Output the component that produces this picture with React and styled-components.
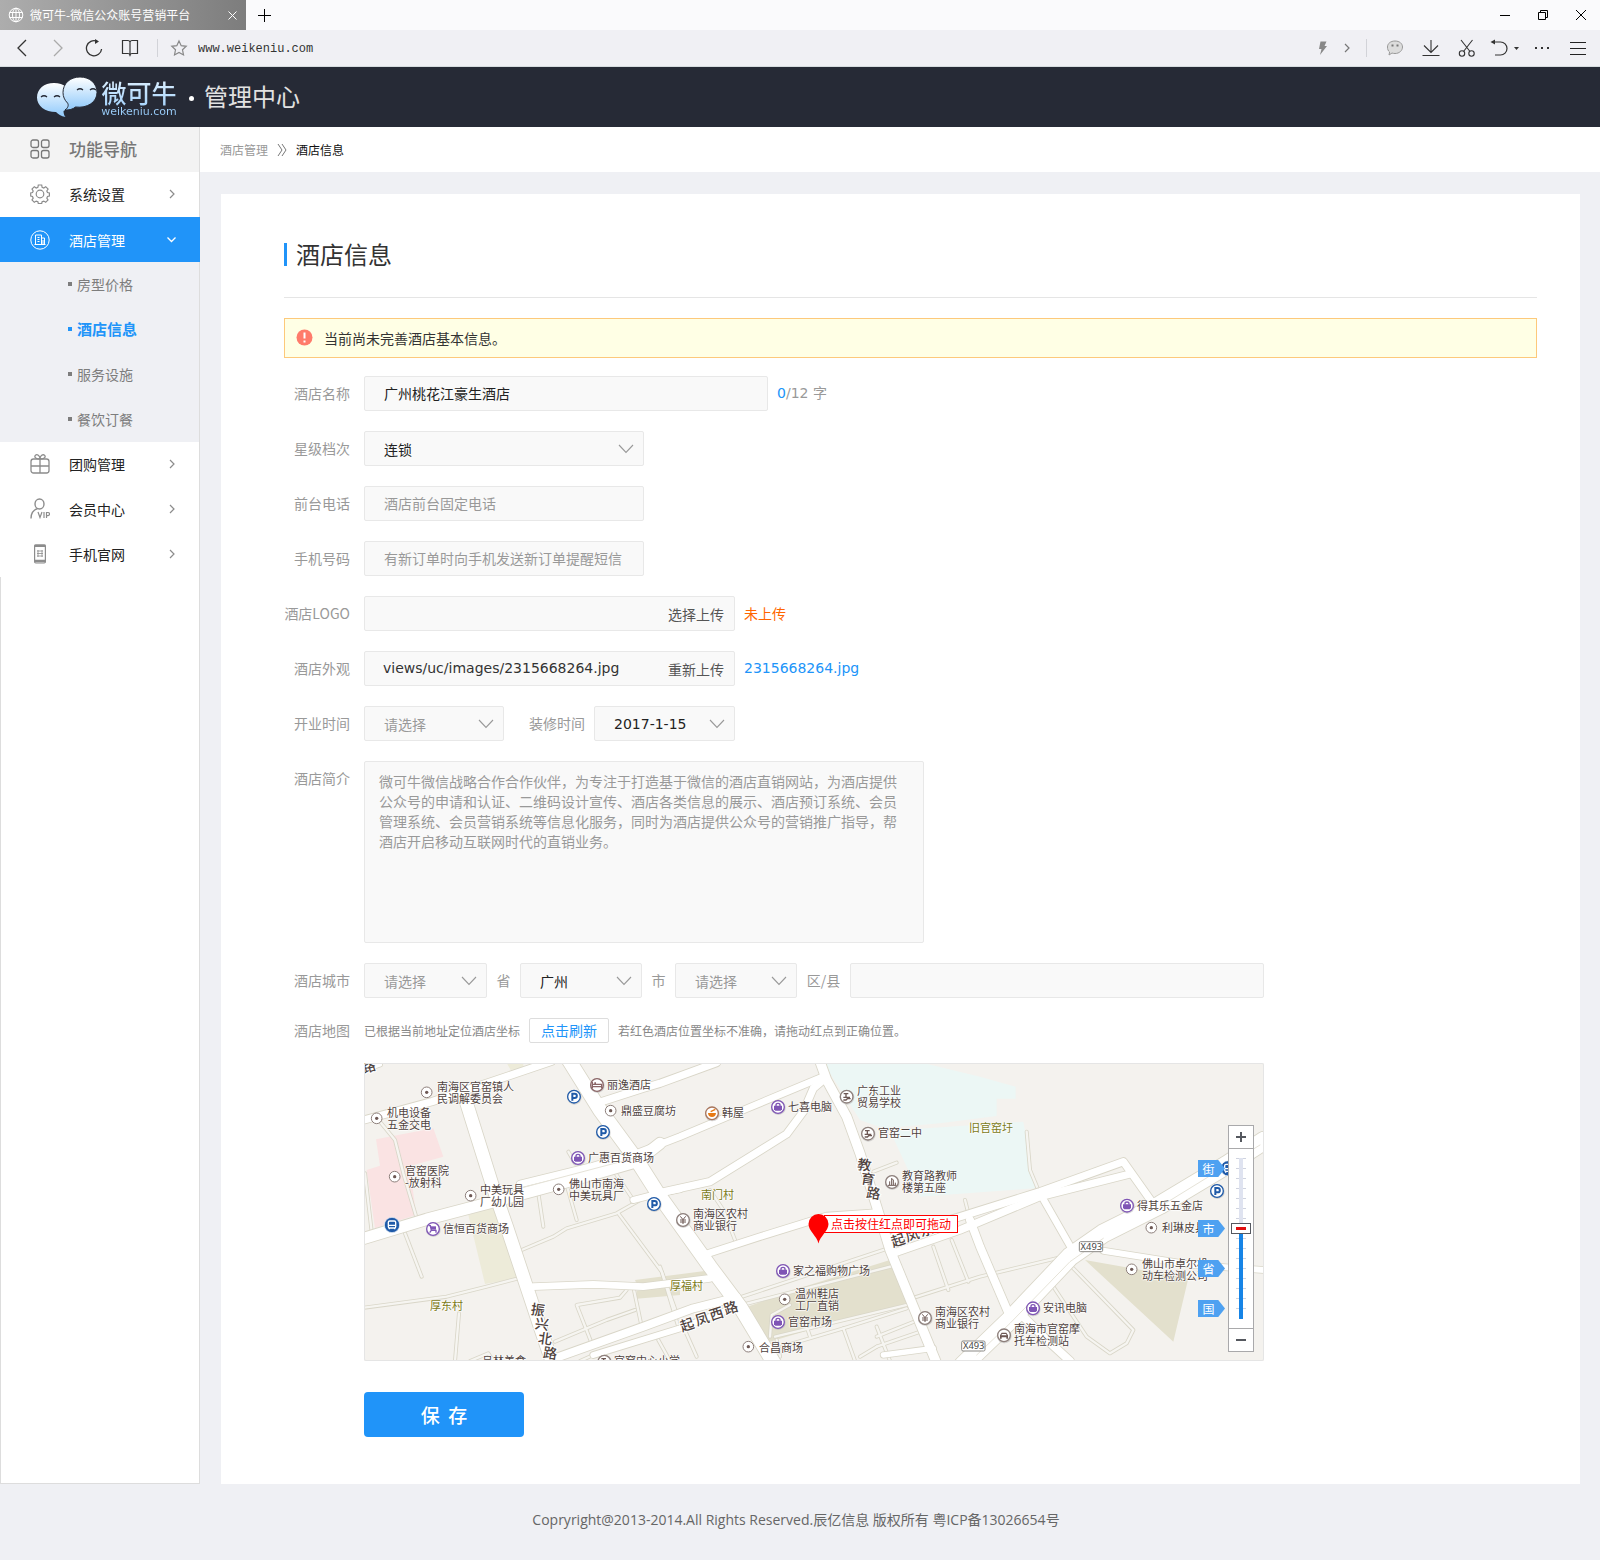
import React, { useState } from 'react';
import styled, { createGlobalStyle, css } from 'styled-components';

const sans = '"Open Sans", "Noto Sans CJK SC", sans-serif';
const cjk = '"Noto Sans CJK SC", sans-serif';
const wide = '"DejaVu Sans", "Noto Sans CJK SC", sans-serif';
const blue = '#2094f9';

const GlobalStyle = createGlobalStyle`
  * { box-sizing: border-box; }
  body { margin: 0; background: #eff0f4; color: #222; font: 14px/20px ${sans}; }
  button, input, select, textarea { font: inherit; color: inherit; }
  button { padding: 0; border: 0; background: none; cursor: pointer; }
  ul, h1, h2, p { margin: 0; padding: 0; list-style: none; font-weight: 400; }
  a { color: inherit; text-decoration: none; }
  svg { display: block; }
`;

/* ---------- browser chrome ---------- */
const TabBar = styled.div`
  display: flex;
  height: 30px;
  background: #fafafc;
`;
const Tab = styled.div`
  display: flex;
  align-items: center;
  gap: 6px;
  width: 246px;
  padding: 0 9px 0 8px;
  background: linear-gradient(90deg, #adadad, #7d7d7d);
  color: #fff;
  font: 12px/18px ${cjk};
  span { flex: 1; white-space: nowrap; }
`;
const Spacer = styled.div`flex: 1;`;
const IconButton = styled.button`
  display: flex;
  align-items: center;
  justify-content: center;
  gap: 6px;
  flex: none;
  width: ${(p) => p.$w || 36}px;
  color: ${(p) => p.$color || '#333'};
`;
const ToolBar = styled.div`
  display: flex;
  align-items: stretch;
  height: 37px;
  padding: 0 4px;
  border-bottom: 1px solid #d6dcdf;
  background: #f0f0f4;
`;
const Divider = styled.i`
  width: 1px;
  height: 18px;
  margin: 9px ${(p) => p.$right}px 0 ${(p) => p.$left}px;
  background: #d2d3d8;
`;
const Address = styled.input`
  width: 300px;
  padding: 2px 1px 0;
  border: 0;
  outline: 0;
  background: none;
  color: #333;
  font: 12px/18px "Liberation Mono", monospace;
`;

/* ---------- site header ---------- */
const Header = styled.header`
  display: flex;
  align-items: center;
  height: 60px;
  padding-left: 36px;
  background: #262a36;
`;
const Brand = styled.a`
  display: flex;
  align-items: center;
  gap: 2px;
`;
const BrandText = styled.span`
  display: flex;
  flex-direction: column;
  align-items: center;
  width: 78px;
  padding-top: 4px;
  background: linear-gradient(#e4f3ff, #8ec8fb);
  background-clip: text;
  color: transparent;
  font: 500 25px/26px ${cjk};
  small { font: 11px/14px "DejaVu Sans", sans-serif; }
`;
const Dot = styled.i`
  width: 5px;
  height: 5px;
  margin: 3px 10px 0 11px;
  border-radius: 50%;
  background: #fff;
`;
const Center = styled.span`
  padding-bottom: 2px;
  color: #e2e2e2;
  font: 24px/36px ${cjk};
`;

/* ---------- frame ---------- */
const Frame = styled.div`
  display: grid;
  grid-template-columns: 200px minmax(0, 1fr);
`;
const Sidebar = styled.nav`
  display: flex;
  flex-direction: column;
  background: #fff;
  box-shadow: inset -1px 0 #ddd;
`;
const NavHead = styled.h2`
  display: flex;
  align-items: center;
  gap: 19px;
  height: 45px;
  margin-right: 1px;
  padding: 0 0 2px 30px;
  background: #f3f3f3;
  color: #777;
  font: 500 17px/24px ${cjk};
`;
const NavRow = styled.a`
  display: flex;
  align-items: center;
  gap: 19px;
  height: 45px;
  padding: 0 24px ${(p) => (p.$active ? 0 : 2)}px 30px;
  font: 14px/20px ${cjk};
  color: ${(p) => (p.$active ? '#fff' : '#222')};
  background: ${(p) => (p.$active ? blue : 'transparent')};
  svg { color: ${(p) => (p.$active ? '#fff' : '#8c8c8c')}; }
  span { flex: 1; }
`;
const SubList = styled.ul`
  margin-right: 1px;
  background: #eff0f4;
`;
const SubLink = styled.a`
  display: flex;
  align-items: center;
  gap: 5px;
  height: 45px;
  padding: 0 0 2px 68px;
  color: #7d7d7d;
  font: 14px/20px ${cjk};
  &::before { content: ''; width: 4px; height: 4px; background: currentColor; }
  ${(p) => p.$active && css`color: ${blue}; font-weight: 700; font-size: 15px;`}
`;
const Filler = styled.div`
  flex: 1;
  border: solid #ddd;
  border-width: 0 1px 1px;
`;
const Crumbs = styled.div`
  display: flex;
  align-items: center;
  gap: 9px;
  height: 45px;
  padding-left: 20px;
  background: #fff;
  color: #999;
  font: 12px/18px ${cjk};
  svg { color: #777; }
  b { color: #111; font-weight: 400; }
`;
const Card = styled.main`
  margin: 22px 20px 0 21px;
  padding: 45px 43px 47px 63px;
  background: #fff;
`;
const Title = styled.h1`
  display: flex;
  align-items: center;
  gap: 9px;
  padding-bottom: 28px;
  border-bottom: 1px solid #e5e5e5;
  color: #333;
  font: 24px/30px ${cjk};
  &::before { content: ''; width: 3px; height: 23px; background: ${blue}; }
`;
const Alert = styled.p`
  display: flex;
  align-items: center;
  gap: 11px;
  height: 40px;
  margin: 20px 0 18px;
  padding: 0 0 1px 11px;
  border: 1px solid #fdc97b;
  background: #ffffe5;
  color: #333;
  font-family: ${cjk};
`;

/* ---------- form ---------- */
const Form = styled.form`
  display: flex;
  flex-direction: column;
  gap: 20px;
  max-width: 980px;
  font-family: ${cjk};
`;
const Row = styled.div`
  display: grid;
  grid-template-columns: 66px minmax(0, 1fr);
  column-gap: 14px;
  line-height: ${(p) => p.$line || 35}px;
`;
const Label = styled.label`
  color: #999;
  text-align: right;
  white-space: nowrap;
`;
const Controls = styled.div`
  display: flex;
  align-items: center;
`;
const box = css`
  height: 35px;
  border: 1px solid #e8e8e8;
  border-radius: 2px;
  background: #f9f9f9;
  outline: 0;
`;
const Input = styled.input`
  ${box}
  width: ${(p) => p.$w}px;
  padding: 0 19px;
  color: #222;
  &::placeholder { color: #999; opacity: 1; }
`;
const GrowInput = styled(Input)`
  flex: 1;
  min-width: 0;
`;
const SelectBox = styled.span`
  position: relative;
  width: ${(p) => p.$w}px;
  height: 35px;
  color: #999;
  svg { position: absolute; right: 10px; top: 13px; pointer-events: none; }
`;
const NativeSelect = styled.select`
  ${box}
  display: block;
  width: 100%;
  padding: 0 30px 0 19px;
  appearance: none;
  color: ${(p) => (p.$dim ? '#999' : '#222')};
  font-family: ${(p) => (p.$wide ? wide : cjk)};
`;
const Unit = styled.span`
  width: ${(p) => p.$w || 33}px;
  color: #999;
  text-align: center;
`;
const SideLabel = styled.label`
  margin: 0 9px 0 25px;
  color: #999;
`;
const Note = styled.span`
  margin-left: 9px;
  color: ${(p) => p.$color || '#999'};
  font-family: ${(p) => (p.$wide ? wide : cjk)};
  b { color: ${blue}; font-weight: inherit; }
`;
const FileBox = styled.div`
  ${box}
  display: flex;
  width: 371px;
  padding-right: 10px;
  input {
    flex: 1;
    min-width: 0;
    padding: 0 0 0 18px;
    border: 0;
    outline: 0;
    background: none;
    color: #333;
    font-family: ${wide};
  }
  button { color: #555; }
`;
const TextArea = styled.textarea`
  ${box}
  display: block;
  width: 560px;
  height: 182px;
  padding: 9px 14px;
  resize: none;
  color: #999;
  line-height: 20px;
`;
const Hint = styled.span`
  color: #888;
  font-size: 12px;
`;
const Refresh = styled.button`
  width: 80px;
  height: 25px;
  margin: 0 9px;
  padding-bottom: 2px;
  border: 1px solid #ddd;
  border-radius: 2px;
  background: #fff;
  color: ${blue};
  line-height: 20px;
`;
const Save = styled.button`
  width: 160px;
  height: 45px;
  margin: 11px 0 0 80px;
  border-radius: 4px;
  background: ${blue};
  color: #fff;
  font: 500 19px/45px ${cjk};
  white-space: pre;
`;
const Footer = styled.footer`
  padding: 26px 8px 30px 0;
  color: #666;
  text-align: center;
`;

/* ---------- map ---------- */
const MapBox = styled.div`
  position: relative;
  height: 298px;
  max-width: 900px;
  margin-left: 80px;
  overflow: hidden;
  background: #f4f2ee;
  &::after {
    content: '';
    position: absolute;
    inset: 0;
    border: 1px solid #e5e5e5;
    border-radius: 2px;
    pointer-events: none;
  }
`;
const Place = styled.span`
  position: absolute;
  left: ${(p) => p.$x}px;
  top: ${(p) => p.$y - 1}px;
  color: ${(p) => (p.$village ? '#7b7a17' : '#4f4340')};
  font: 11px/12px ${cjk};
  white-space: pre;
  text-shadow: 0 0 1px #fff, 1px 0 1px #fff, -1px 0 1px #fff, 0 1px 1px #fff;
`;
const PinTip = styled.span`
  position: absolute;
  left: 460px;
  top: 152px;
  height: 18px;
  padding: 0 6px;
  border: 1px solid #f00;
  background: #fff;
  color: #f00;
  font: 12px/15px ${cjk};
  white-space: nowrap;
`;
const PinMark = styled.svg`
  position: absolute;
  left: 444px;
  top: 151px;
`;
const ZoomPanel = styled.div`
  position: absolute;
  right: 10px;
  top: 62px;
  display: flex;
  flex-direction: column;
  align-items: center;
  width: 26px;
  height: 227px;
  border: 1px solid #a9a9ab;
  background: #fff;
  button {
    display: grid;
    place-items: center;
    width: 100%;
    height: 23px;
    color: #55585f;
  }
  button:first-child { border-bottom: 1px solid #a9a9ab; }
  button:last-child { border-top: 1px solid #a9a9ab; }
`;
const TickTrack = styled.div`
  display: flex;
  flex: 1;
  justify-content: center;
  padding: 9px 0 8px;
  background: repeating-linear-gradient(#cfd3df 0 1px, transparent 1px 10px) center 9px / 10px 152px no-repeat;
`;
const ZoomRange = styled.input`
  width: 20px;
  height: 161px;
  margin: 0;
  appearance: none;
  writing-mode: vertical-lr;
  direction: rtl;
  background: linear-gradient(#dfe3f0 0 70px, #1684e6 70px) center / 4px 100% no-repeat;
  &::-webkit-slider-thumb {
    appearance: none;
    width: 20px;
    height: 11px;
    border: 1px solid #55585f;
    background: linear-gradient(#e00f0f, #e00f0f) center / 10px 3px no-repeat #fff;
  }
`;
const LevelTag = styled.button`
  position: absolute;
  right: 39px;
  top: ${(p) => p.$y}px;
  width: 27px;
  height: 17px;
  padding-right: 6px;
  background: #4ea1f1;
  clip-path: polygon(0 0, 75% 0, 100% 50%, 75% 100%, 0 100%);
  color: #fff;
  font: 12px/16px ${cjk};
`;

const places = [
  [73, 18, '南海区官窑镇人\n民调解委员会'], [23, 44, '机电设备\n五金交电'],
  [41, 102, '官窑医院\n-放射科'], [116, 121, '中美玩具\n厂幼儿园'],
  [205, 115, '佛山市南海\n中美玩具厂'], [243, 16, '丽逸酒店'], [257, 42, '鼎盛豆腐坊'],
  [224, 89, '广惠百货商场'], [79, 160, '信恒百货商场'], [66, 237, '厚东村', 1],
  [306, 217, '厚福村', 1], [337, 126, '南门村', 1], [358, 44, '韩屋'], [424, 38, '七喜电脑'],
  [493, 22, '广东工业\n贸易学校'], [514, 64, '官窑二中'], [538, 107, '教育路教师\n楼第五座'],
  [605, 59, '旧官窑圩', 1], [329, 145, '南海区农村\n商业银行'], [429, 202, '家之福购物广场'],
  [431, 225, '温州鞋店\n工厂直销'], [424, 253, '官窑市场'], [395, 279, '合昌商场'],
  [571, 243, '南海区农村\n商业银行'], [773, 137, '得其乐五金店'], [798, 159, '利琳皮具'],
  [778, 195, '佛山市卓尔机\n动车检测公司'], [679, 239, '安讯电脑'],
  [650, 260, '南海市官窑摩\n托车检测站'], [118, 292, '吕林美食'], [250, 292, '官窑中心小学'],
];

/* Map geometry: three units to one screen pixel. */
const lanes = [
  'M60 185L105 240 130 340 168 468', 'M15 340L35 515', 'M135 520L185 650', 'M535 400L550 500',
  'M620 375L650 480', 'M485 570L580 530 620 505 770 460 850 415 890 400',
  'M775 460L905 635 955 800', 'M625 275L645 310', 'M760 330L820 420',
  'M12 743L260 710 380 680 475 655', 'M297 760L285 903', 'M585 845L740 780 825 750',
  'M695 850L650 735 780 713 800 690', 'M822 690L845 800', 'M895 840L930 903', 'M330 903L385 880 400 903',
  'M1050 390L1090 450 1125 540', 'M1540 335L1610 308', 'M1140 712L1600 560', 'M1145 735L1610 615',
  'M1230 830L1235 765 1290 735', 'M1245 830L1660 730', 'M1330 770L1350 830', 'M1250 840L1260 890',
  'M1265 860L1450 805 1640 745', 'M1450 805L1485 903', 'M1550 830L1675 780', 'M1550 860L1690 812',
  'M1550 800L1590 903', 'M1500 890L1550 860', 'M1640 720L1860 650 2110 590', 'M1720 560L1765 690', 'M1775 540L1825 665',
  'M1815 420L1830 480', 'M2000 215L2010 330 2035 390', 'M2140 625L2320 810 2300 850 2250 880 2180 830 2080 680',
  'M900 620L950 760', 'M970 800L1010 890', 'M660 903L700 885',
];
const roads = [
  [12, 'M12 30L60 14'], [22, 'M12 180L215 125 380 70 575 4'], [22, 'M710 130L850 85 900 70 1070 8'],
  [34, 'M12 535L200 478 400 425 620 365 830 305 900 250'], [20, 'M480 372L700 318 830 280 960 230 1150 150 1390 50'],
  [22, 'M890 400L1050 365 1280 222 1330 155 1360 85 1390 60'], [18, 'M820 420L890 402 960 388'],
  [20, 'M520 680L700 673 850 680 1050 655'], [24, 'M590 893L850 800 1000 745 1130 712'],
  [18, 'M700 885L960 805 1130 740'], [20, 'M1030 585L1200 530 1400 468 1550 458'],
  [22, 'M1600 580L1800 510 2040 410 2310 342'], [22, 'M1600 530L1800 470 2040 395 2290 305 2375 425'],
  [24, 'M1830 480L1860 560 1950 770'], [24, 'M1990 770L2050 830 2130 903'], [20, 'M2040 400L2140 575'],
  [18, 'M2230 572L2500 615 2712 630'], [16, 'M1570 885L1720 865'],
  [38, 'M320 130L345 210 400 385 440 500 500 680 540 800 575 903'],
  [42, 'M620 -10L720 150 830 300 900 410 1050 620 1140 740 1245 915'],
  [28, 'M1380 5L1400 60 1460 170 1500 280 1550 440 1590 570 1660 740 1730 910'],
  [54, 'M1810 915L1950 780 2130 590 2230 520 2400 435 2600 315 2712 242'],
];
const dots = [[200, 97], [50, 175], [104, 350], [332, 407], [596, 388], [752, 152], [1274, 718], [1165, 860], [2374, 503], [2315, 628]];
const parks = [[642, 110], [729, 216], [882, 432], [2571, 393]];
const bags = [[654, 294], [1254, 141], [1269, 633], [1254, 786], [2301, 437], [2019, 745]];
const schools = [[1460, 110], [1524, 221], [733, 905]];
const banks = [[969, 480], [1695, 774]];
const roadNames = [
  ['振', 533, 752, 8], ['兴', 545, 795, 8], ['北', 555, 838, 8], ['路', 570, 882, 8],
  ['教', 1513, 317, 8], ['育', 1523, 360, 8], ['路', 1540, 402, 8],
  ['起', 982, 796, -18], ['凤', 1027, 779, -18], ['西', 1070, 763, -18], ['路', 1113, 745, -18],
  ['起', 1615, 543, -18], ['凤', 1657, 527, -18], ['东', 1700, 512, -18], ['路', 1742, 498, -18], ['路', 26, 22, -18],
];

function Badge({ at, color, children }) {
  return (
    <g transform={`translate(${at[0]} ${at[1]})`}>
      <circle r="22" cy="2" cx="1" fill="#bbb" opacity=".6" />
      <circle r="19" fill="#fff" stroke={color} strokeWidth="4" />
      {children}
    </g>
  );
}

function MapDrawing() {
  return (
    <svg width="900" height="298" viewBox="12 9 2700 894" aria-hidden="true">
      <g>
        <path fill="#ecf7f5" d="M1390 9H1690L1860 50 1967 80V116H1910V168L1740 190 1570 205 1500 180Z M1590 212L1990 185 2025 385 1680 410 1640 320Z" />
        <path fill="#fae3e3" d="M48 238L220 205 250 290 150 318 168 465 45 505 20 330 60 317Z" />
        <path fill="#edebd9" d="M325 465L400 440 475 655 375 672Z M440 9H490V22L452 30Z" />
        <path fill="#e3e0cd" d="M1150 745L1300 690 1590 600 1640 730 1380 800 1215 850Z M825 660L1040 632V655L830 672Z M830 692L960 678V705L830 716Z M2175 600L2485 655 2440 845Z" />
      </g>
      <g fill="none" strokeLinejoin="round" strokeLinecap="round">
        {lanes.map((d) => <path key={d} d={d} stroke="#d9d6c8" strokeWidth="12" />)}
        {lanes.map((d) => <path key={d} d={d} stroke="#f6f5f1" strokeWidth="7" />)}
        {roads.map(([w, d]) => <path key={d} d={d} stroke="#d9d6c8" strokeWidth={w + 5} />)}
        {roads.map(([w, d]) => <path key={d} d={d} stroke="#fff" strokeWidth={w} />)}
        <path d="M1850 885L1950 790 2130 605 2230 535M2400 440L2700 255M480 385L820 295" stroke="#e6e3d8" strokeWidth="3" />
      </g>
      <g fill="#4f4340" stroke="#fff" strokeWidth="6" paintOrder="stroke" fontFamily="Noto Sans CJK SC" fontSize="42" fontWeight="500" textAnchor="middle">
        {roadNames.map(([t, x, y, r]) => (
          <text key={x} transform={`translate(${x} ${y}) rotate(${r})`} y="13">{t}</text>
        ))}
      </g>
      {[[2158, 545], [1805, 843]].map(([x, y]) => (
        <g key={x} transform={`translate(${x} ${y})`}>
          <rect width="70" height="30" rx="4" fill="#fff" stroke="#8b8985" strokeWidth="3" />
          <text x="36" y="25" fontFamily="Noto Sans" fontSize="28" textAnchor="middle" fill="#444">X493</text>
        </g>
      ))}
      {dots.map((p) => (
        <g key={p} transform={`translate(${p[0]} ${p[1]})`}>
          <circle r="16" fill="#fff" stroke="#8d7f7b" strokeWidth="3" />
          <circle r="5" fill="#6d5854" />
        </g>
      ))}
      {parks.map((p) => (
        <Badge key={p} at={p} color="#1f5aa8">
          <path d="M-5 12V-9H2a6 6 0 0 1 0 13H-5" fill="none" stroke="#1f5aa8" strokeWidth="6" />
        </Badge>
      ))}
      {bags.map((p) => (
        <Badge key={p} at={p} color="#7f55b5">
          <path d="M-12-4H12V7L8 11H-8L-12 7Z" fill="#7f55b5" />
          <path d="M-6-3V-6a6 5 0 0 1 12 0V-3" fill="none" stroke="#7f55b5" strokeWidth="4" />
        </Badge>
      ))}
      <Badge at={[219, 507]} color="#7f55b5">
        <path d="M-6-8H9V2H-6Z" fill="#7f55b5" />
        <path d="M-13-10H-8L-5 4L-10 11M-5 4H9V11" fill="none" stroke="#7f55b5" strokeWidth="4" />
      </Badge>
      <Badge at={[711, 75]} color="#8a6566">
        <path d="M-14-9V10M-14 5H14V10M14 4V-2H-12M-8-6H-3" fill="none" stroke="#8a6566" strokeWidth="4" />
      </Badge>
      {schools.map((p) => (
        <Badge key={p} at={p} color="#8d7f7b">
          <path d="M-9-9H5M-2-9V3M-10 2H10M-10 10H-2L2 6H12" fill="none" stroke="#6d5854" strokeWidth="4" />
        </Badge>
      ))}
      <Badge at={[1596, 366]} color="#8d7f7b">
        <path d="M-7 9V-2M-1 9V-11L4-6V9M10 9V2M-12 10H13" fill="none" stroke="#6d5854" strokeWidth="3" />
      </Badge>
      {banks.map((p) => (
        <Badge key={p} at={p} color="#8d7f7b">
          <path d="M-8-11L0-1 8-11M0-1V12M-9 0H9M-9 6H9" fill="none" stroke="#6d5854" strokeWidth="3" />
        </Badge>
      ))}
      <Badge at={[1056, 160]} color="#a8765c">
        <path d="M-12-1H12Q11 11 0 11T-12-1Z" fill="#e87a14" />
        <path d="M-4-5L10-12" stroke="#e87a14" strokeWidth="4" />
      </Badge>
      <Badge at={[1932, 826]} color="#8d7f7b">
        <path d="M-12 10V0L-7-8H7L12 0V10H7V6H-7V10Z" fill="#6d5854" />
        <path d="M-6-4H6L8 0H-8Z" fill="#fff" />
      </Badge>
      {[[96, 495], [2605, 325]].map((p) => (
        <g key={p} transform={`translate(${p[0]} ${p[1]})`}>
          <circle r="23" fill="#1f5aa8" stroke="#fff" strokeWidth="2" />
          <rect x="-11" y="-12" width="22" height="21" rx="4" fill="none" stroke="#fff" strokeWidth="4" />
          <path d="M-11 1H11M-8 9V13M8 9V13" stroke="#fff" strokeWidth="4" />
        </g>
      ))}
    </svg>
  );
}

function HotelMap() {
  const [zoom, setZoom] = useState(57);
  return (
    <MapBox>
      <MapDrawing />
      {places.map(([x, y, text, village]) => (
        <Place key={`${x}-${y}`} $x={x} $y={y} $village={village}>{text}</Place>
      ))}
      <PinTip>点击按住红点即可拖动</PinTip>
      <PinMark width="21" height="30" viewBox="0 0 21 30">
        <path d="M10.500 29.500C9 22 .5 17 .5 10a10 10 0 0 1 20 0c0 7-8.500 12-10 19.500z" fill="#f00" />
      </PinMark>
      <LevelTag type="button" $y={97}>街</LevelTag>
      <LevelTag type="button" $y={157}>市</LevelTag>
      <LevelTag type="button" $y={197}>省</LevelTag>
      <LevelTag type="button" $y={237}>国</LevelTag>
      <ZoomPanel>
        <button type="button" aria-label="放大"><svg width="10" height="10"><path d="M5 0V10M0 5H10" stroke="currentColor" strokeWidth="2" /></svg></button>
        <TickTrack>
          <ZoomRange type="range" aria-label="缩放" min="0" max="100" value={zoom} onChange={(e) => setZoom(+e.target.value)} />
        </TickTrack>
        <button type="button" aria-label="缩小"><svg width="10" height="10"><path d="M0 5H10" stroke="currentColor" strokeWidth="2" /></svg></button>
      </ZoomPanel>
    </MapBox>
  );
}

/* ---------- small drawings ---------- */
function Line({ w = 18, h = 18, d, sw = 1, color = 'currentColor', children, ...rest }) {
  return (
    <svg width={w} height={h} viewBox={`0 0 ${w} ${h}`} fill="none" stroke={color} strokeWidth={sw} aria-hidden="true" {...rest}>
      {d && <path d={d} />}
      {children}
    </svg>
  );
}

function Select({ id, w, options, dim, wideText, label }) {
  return (
    <SelectBox $w={w}>
      <NativeSelect id={id} aria-label={label} $dim={dim} $wide={wideText}>
        {options.map((o) => <option key={o}>{o}</option>)}
      </NativeSelect>
      <Line w={16} h={10} d="M1 1L8 8.500 15 1" sw={1.1} />
    </SelectBox>
  );
}

const navIcons = {
  settings: (
    <Line w={20} h={20} sw={1.2}>
      <circle cx="10" cy="10" r="3.800" />
      <path d="M8.300 1h3.400l.4 2.300 1.700.7 1.900-1.300 2.400 2.400-1.300 1.900.7 1.600 1.900.4v3l-1.900.5-.7 1.700 1.200 1.800-2.300 2.300-1.900-1.200-1.700.7-.4 1.700H8.300l-.4-1.700-1.700-.7-1.900 1.200L2 16l1.200-1.800-.7-1.700L.7 12V9l1.800-.4L3.200 7 2 5.100l2.300-2.400L6.200 4l1.700-.7z" />
    </Line>
  ),
  hotel: (
    <Line w={20} h={20} sw={1}>
      <circle cx="10" cy="10" r="9.200" />
      <path d="M5.500 14.500V5h6v9.500M11.500 8h3v6.500M4.500 14.500h11M7.500 7.500h2M7.500 9.500h2M7.500 11.500h2M13 10v4" />
    </Line>
  ),
  gift: (
    <Line w={20} h={20} sw={1.3}>
      <rect x="1" y="5" width="18" height="14" rx="2.500" />
      <path d="M1 12h18M10 5v14M10 5C5 5 4 2.500 5.500 1.200S10 1.500 10 5c0-3.500 3-5 4.500-3.800S15 5 10 5" />
    </Line>
  ),
  vip: (
    <Line w={20} h={21} sw={1.4}>
      <ellipse cx="9.500" cy="6" rx="4.500" ry="5" />
      <path d="M1 20.500c0-5 2.500-8.500 6.500-9.800" />
      <path d="M8 14l2 5.500 2-5.500M14 14v6M16.500 20v-5.500h1.500q1.500 0 1.500 1.500t-1.500 1.600h-1.500" strokeWidth="1.200" />
    </Line>
  ),
  phone: (
    <Line w={20} h={20} sw={1.2}>
      <rect x="4.600" y="1" width="10.800" height="18" rx="1.200" />
      <path d="M4.500 1.800h11M4.500 17h11" strokeWidth="2.500" />
      <path d="M7 7h6M7 9.500h6M7 12h6M8 6v7M12 6v7" strokeWidth=".8" />
    </Line>
  ),
};

const Chevron = ({ down }) => (down
  ? <Line w={9} h={6} d="M.5.5L4.500 4.500 8.500.5" sw={1.3} />
  : <Line w={8} h={10} d="M2 1L6 5 2 9" sw={1.2} />);

function NavItem({ icon, text, active }) {
  return (
    <NavRow href="#" $active={active}>
      {navIcons[icon]}
      <span>{text}</span>
      <Chevron down={active} />
    </NavRow>
  );
}

function Browser() {
  return (
    <>
      <TabBar>
        <Tab>
          <Line w={16} h={16}>
            <circle cx="8" cy="8" r="6.800" />
            <ellipse cx="8" cy="8" rx="3.500" ry="6.800" />
            <path d="M8 1v14M1.500 5.500h13M1.500 10.500h13" />
          </Line>
          <span>微可牛-微信公众账号营销平台</span>
          <IconButton $w={9} $color="#fff" aria-label="关闭标签"><Line w={9} h={9} d="M.5.5l8 8M8.500.5l-8 8" /></IconButton>
        </Tab>
        <IconButton aria-label="新建标签"><Line w={13} h={13} d="M6.500 0v13M0 6.500h13" color="#000" /></IconButton>
        <Spacer />
        <IconButton $w={38} aria-label="最小化"><Line w={10} h={10} d="M0 5.500h10" color="#000" /></IconButton>
        <IconButton $w={38} aria-label="还原"><Line w={10} h={10} d="M.5 2.500h7v7h-7zM2.500 2.500v-2h7v7h-2" color="#000" /></IconButton>
        <IconButton $w={38} aria-label="关闭"><Line w={10} h={10} d="M0 0l10 10M10 0L0 10" color="#000" /></IconButton>
      </TabBar>
      <ToolBar>
        <IconButton aria-label="后退"><Line d="M13 1L5 9l8 8" sw={1.3} /></IconButton>
        <IconButton $color="#aaa" aria-label="前进"><Line d="M5 1l8 8-8 8" sw={1.3} /></IconButton>
        <IconButton aria-label="刷新">
          <Line sw={1.3}><path d="M12 2.200A7.600 7.600 0 1 0 16.600 10" /><path d="M10 0l4 2.500L10 5z" fill="currentColor" stroke="none" /></Line>
        </IconButton>
        <IconButton aria-label="阅读"><Line d="M9 3v14M9 3Q8.500 1.500 7 1.500H1.500v13H7q1.500 0 2 1.500.5-1.500 2-1.500h5.500v-13H11Q9.500 1.500 9 3z" sw={1.2} /></IconButton>
        <Divider $left={9} $right={3} />
        <IconButton $color="#888" aria-label="收藏"><Line d="M9 2l2.200 4.700 5 .6-3.700 3.500 1 5.100L9 13.400l-4.500 2.500 1-5.100L1.800 7.300l5-.6z" sw={1.2} /></IconButton>
        <Address aria-label="地址" defaultValue="www.weikeniu.com" />
        <Spacer />
        <IconButton $w={24} $color="#888" aria-label="极速"><svg width="8" height="14"><path d="M1.500.5h6L5.500 5H8L1 14l1.500-6H0z" fill="currentColor" /></svg></IconButton>
        <IconButton $w={24} $color="#777" aria-label="展开"><Line w={8} h={10} d="M2 1l4 4-4 4" sw={1.2} /></IconButton>
        <Divider $left={7} $right={10} />
        <IconButton $color="#999" aria-label="聊天">
          <Line w={18} h={16}>
            <path d="M9 1c4.500 0 7.500 2.600 7.500 6s-3 6.500-7.500 6.500c-1 0-2-.1-3-.5l-3 2 .6-3C2.200 11 1.500 9.200 1.500 7 1.500 3.600 4.500 1 9 1z" fill="#dcdcdc" />
            <path d="M5.500 5.500h2M10.500 5.500h2" strokeWidth="2" stroke="#777" />
          </Line>
        </IconButton>
        <IconButton aria-label="下载"><Line d="M9 1v12M2 6.500l7 7 7-7M.5 16.500h17" sw={1.1} /></IconButton>
        <IconButton aria-label="截图">
          <Line sw={1.1}><path d="M3 1l9 11.500M14.500 1l-9 11.500" /><circle cx="4" cy="14.500" r="2.700" /><circle cx="13.500" cy="14.500" r="2.700" /></Line>
        </IconButton>
        <IconButton $w={39} aria-label="撤销">
          <Line sw={1.2}><path d="M3 3h7.500a6.500 6.500 0 0 1 0 13H5" /><path d="M.5 3L5 .5v5z" fill="currentColor" stroke="none" /></Line>
          <svg width="5" height="3"><path d="M0 0h5L2.500 3z" fill="#333" /></svg>
        </IconButton>
        <IconButton aria-label="更多"><svg width="15" height="2"><path d="M0 0h2v2H0zM6 0h2v2H6zM12 0h2v2h-2z" fill="#333" /></svg></IconButton>
        <IconButton aria-label="菜单"><Line w={16} h={14} d="M0 1.500h16M0 7.500h16M0 13.500h16" color="#222" /></IconButton>
      </ToolBar>
    </>
  );
}

function Logo() {
  return (
    <Brand href="#">
      <svg width="62" height="42" viewBox="0 0 62 42" aria-hidden="true">
        <defs>
          <linearGradient id="bubble" x1="0" y1="0" x2="0" y2="1">
            <stop offset="0" stopColor="#fff" /><stop offset="1" stopColor="#8fc9fb" />
          </linearGradient>
        </defs>
        <path d="M18 7C8 7 1 13 1 21.500S9 36 20 36c2 2 5 4.500 9.500 5-1.500-1.500-2-4-2-6 5-2.500 7.500-8 7.500-13.500C35 13 28 7 18 7z" fill="url(#bubble)" />
        <path d="M44 1C34 1 27 7.500 27 16.500c0 4 1.500 7.500 4.500 10.500 1.500 2 .5 5-2.500 7 4 .3 8-.8 10.500-3 12 1.500 21.500-5 21.500-14.500C61 7.500 54 1 44 1z" fill="url(#bubble)" stroke="#262a36" strokeWidth="1" />
        <path d="M5 21q3-2.500 6 0M18 21q3-2.500 6 0M41 14q3-2.500 6 0M54 14q3-2.500 6 0" fill="none" stroke="#262a36" strokeWidth="1.300" />
      </svg>
      <BrandText>微可牛<small>weikeniu.com</small></BrandText>
    </Brand>
  );
}

const intro = '微可牛微信战略合作合作伙伴，为专注于打造基于微信的酒店直销网站，为酒店提供公众号的申请和认证、二维码设计宣传、酒店各类信息的展示、酒店预订系统、会员管理系统、会员营销系统等信息化服务，同时为酒店提供公众号的营销推广指导，帮酒店开启移动互联网时代的直销业务。';

function HotelForm() {
  return (
    <Form onSubmit={(e) => e.preventDefault()}>
      <Row>
        <Label htmlFor="name">酒店名称</Label>
        <Controls><Input id="name" $w={404} defaultValue="广州桃花江豪生酒店" /><Note $wide><b>0</b>/12 字</Note></Controls>
      </Row>
      <Row>
        <Label htmlFor="level">星级档次</Label>
        <Controls><Select id="level" w={280} options={['连锁']} /></Controls>
      </Row>
      <Row>
        <Label htmlFor="tel">前台电话</Label>
        <Controls><Input id="tel" $w={280} placeholder="酒店前台固定电话" /></Controls>
      </Row>
      <Row>
        <Label htmlFor="mobile">手机号码</Label>
        <Controls><Input id="mobile" $w={280} placeholder="有新订单时向手机发送新订单提醒短信" /></Controls>
      </Row>
      <Row>
        <Label htmlFor="logo">酒店LOGO</Label>
        <Controls>
          <FileBox><input id="logo" readOnly /><button type="button">选择上传</button></FileBox>
          <Note $color="#ff6600">未上传</Note>
        </Controls>
      </Row>
      <Row>
        <Label htmlFor="photo">酒店外观</Label>
        <Controls>
          <FileBox><input id="photo" readOnly value="views/uc/images/2315668264.jpg" /><button type="button">重新上传</button></FileBox>
          <Note as="a" href="#" $wide $color={blue}>2315668264.jpg</Note>
        </Controls>
      </Row>
      <Row>
        <Label htmlFor="opened">开业时间</Label>
        <Controls>
          <Select id="opened" w={140} options={['请选择']} dim />
          <SideLabel htmlFor="renewed">装修时间</SideLabel>
          <Select id="renewed" w={141} options={['2017-1-15']} wideText />
        </Controls>
      </Row>
      <Row>
        <Label htmlFor="intro">酒店简介</Label>
        <TextArea id="intro" defaultValue={intro} />
      </Row>
      <Row>
        <Label htmlFor="province">酒店城市</Label>
        <Controls>
          <Select id="province" w={123} options={['请选择']} dim /><Unit>省</Unit>
          <Select label="市" w={122} options={['广州']} /><Unit>市</Unit>
          <Select label="区/县" w={122} options={['请选择']} dim /><Unit $w={53}>区/县</Unit>
          <GrowInput aria-label="详细地址" />
        </Controls>
      </Row>
      <Row $line={25}>
        <Label as="span">酒店地图</Label>
        <Controls>
          <Hint>已根据当前地址定位酒店坐标</Hint>
          <Refresh type="button">点击刷新</Refresh>
          <Hint>若红色酒店位置坐标不准确，请拖动红点到正确位置。</Hint>
        </Controls>
      </Row>
      <HotelMap />
      <Save type="submit">保  存</Save>
    </Form>
  );
}

export default function App() {
  return (
    <>
      <GlobalStyle />
      <Browser />
      <Header><Logo /><Dot /><Center>管理中心</Center></Header>
      <Frame>
        <Sidebar>
          <NavHead>
            <Line w={20} h={20} sw={1.3}>
              <rect x="1" y="1" width="7.500" height="7.500" rx="2" /><rect x="11.500" y="1" width="7.500" height="7.500" rx="2" />
              <rect x="1" y="11.500" width="7.500" height="7.500" rx="2" /><rect x="11.500" y="11.500" width="7.500" height="7.500" rx="2" />
            </Line>
            功能导航
          </NavHead>
          <NavItem icon="settings" text="系统设置" />
          <NavItem icon="hotel" text="酒店管理" active />
          <SubList>
            {['房型价格', '酒店信息', '服务设施', '餐饮订餐'].map((t, i) => (
              <li key={t}><SubLink href="#" $active={i === 1}>{t}</SubLink></li>
            ))}
          </SubList>
          <NavItem icon="gift" text="团购管理" />
          <NavItem icon="vip" text="会员中心" />
          <NavItem icon="phone" text="手机官网" />
          <Filler />
        </Sidebar>
        <div>
          <Crumbs>
            <a href="#">酒店管理</a>
            <Line w={10} h={14} d="M1 1l4 6-4 6M5 1l4 6-4 6" />
            <b>酒店信息</b>
          </Crumbs>
          <Card>
            <Title>酒店信息</Title>
            <Alert>
              <svg width="17" height="17" aria-hidden="true"><circle cx="8.500" cy="8.500" r="8" fill="#ff7b6b" /><path d="M8.500 3.500v6M8.500 11.500v2" stroke="#fff" strokeWidth="2" /></svg>
              当前尚未完善酒店基本信息。
            </Alert>
            <HotelForm />
          </Card>
        </div>
      </Frame>
      <Footer>Copryright@2013-2014.All Rights Reserved.辰亿信息 版权所有 粤ICP备13026654号</Footer>
    </>
  );
}
